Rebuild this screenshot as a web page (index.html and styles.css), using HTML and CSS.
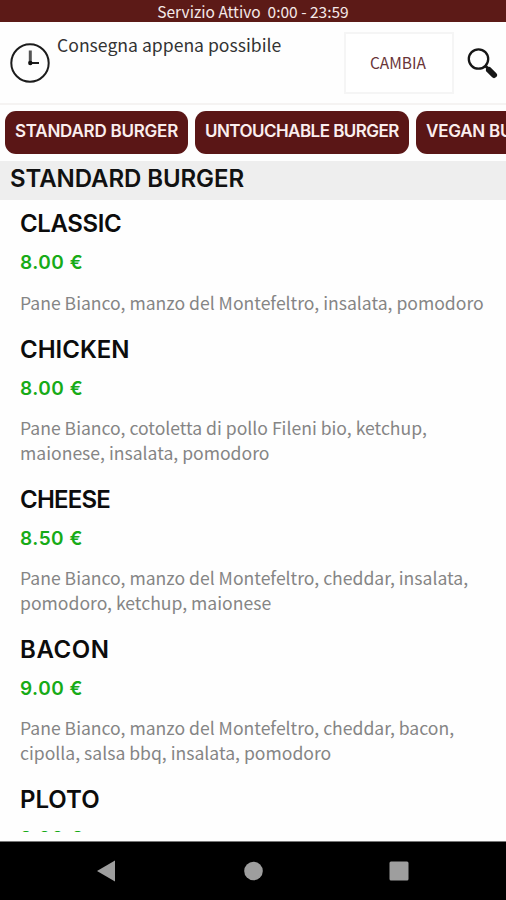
FILE: index.html
```html
<!DOCTYPE html>
<html lang="it">
<head>
<meta charset="utf-8">
<title>Menu</title>
<link rel="stylesheet" href="styles.css">
</head>
<body>
<div class="status"><span>Servizio Attivo&nbsp; 0:00 - 23:59</span></div>
<header class="delivery">
  <svg class="clock" viewBox="0 0 40 40"><circle cx="20" cy="20" r="18.7"/><path class="hand" d="M20.3 7.5V20"/><path d="M20 20H29"/><circle class="hub" cx="20.3" cy="20" r="2.2"/></svg>
  <div class="when"><span>Consegna appena possibile</span></div>
  <button class="change"><span>CAMBIA</span></button>
  <svg class="search" viewBox="0 0 32 32"><circle cx="11.5" cy="11" r="9.7"/><path class="neck" d="M18.5 18L22 21.5"/><path class="handle" d="M22 22L27 27"/></svg>
</header>
<nav class="tabs">
  <a class="tab t1"><span>STANDARD BURGER</span></a>
  <a class="tab t2"><span>UNTOUCHABLE BURGER</span></a>
  <a class="tab t3"><span>VEGAN BURGER</span></a>
</nav>
<h1 class="section"><span>STANDARD BURGER</span></h1>
<main class="menu">
  <article class="item"><h2 class="tight"><span>CLASSIC</span></h2><div class="price"><span>8.00 €</span></div><p><span>Pane Bianco, manzo del Montefeltro, insalata, pomodoro</span></p></article>
  <article class="item"><h2><span>CHICKEN</span></h2><div class="price"><span>8.00 €</span></div><p><span>Pane Bianco, cotoletta di pollo Fileni bio, ketchup,</span><br><span>maionese, insalata, pomodoro</span></p></article>
  <article class="item"><h2 class="tighter"><span>CHEESE</span></h2><div class="price"><span>8.50 €</span></div><p><span>Pane Bianco, manzo del Montefeltro, cheddar, insalata,</span><br><span>pomodoro, ketchup, maionese</span></p></article>
  <article class="item"><h2 class="wide"><span>BACON</span></h2><div class="price"><span>9.00 €</span></div><p><span>Pane Bianco, manzo del Montefeltro, cheddar, bacon,</span><br><span>cipolla, salsa bbq, insalata, pomodoro</span></p></article>
  <article class="item"><h2><span>PLOTO</span></h2><div class="price"><span>9.00 €</span></div></article>
</main>
<footer class="navbar">
  <svg viewBox="0 0 20 22"><path d="M0 11L18 .5V21.5Z"/></svg>
  <svg viewBox="0 0 20 22"><circle cx="10.5" cy="11" r="9.3"/></svg>
  <svg viewBox="0 0 20 22"><rect x=".5" y="1.5" width="19" height="19" rx="1.5"/></svg>
</footer>
</body>
</html>
```

FILE: styles.css
```css
*{box-sizing:border-box}
body{margin:0;width:506px;height:900px;overflow:hidden;display:flex;flex-direction:column;background:#fefefe;font-family:"Noto Sans CJK SC",sans-serif;white-space:nowrap}
.status{height:22px;flex:none;background:#5c1a17;color:#f5e9e8;text-align:center;font-size:15.5px;line-height:23px}
.delivery{height:83px;flex:none;display:flex;border-bottom:2px solid #f5f3f2;padding:0 7px 0 10px;align-items:flex-start}
.clock{width:40px;height:40px;margin-top:21px;fill:none;stroke:#1c1c1c;stroke-width:2}
.clock .hand{stroke:#555;stroke-width:3}
.clock .hub{fill:#111;stroke:none}
.when{width:287px;margin:11px 0 0 7px;font-size:17.6px;line-height:24px;color:#333}
.change{width:110px;height:62px;margin-top:10px;border:2px solid #f5f5f5;background:#fff;padding:0 2px 2px 0;color:#693438;font:15.5px/24px "Noto Sans CJK SC",sans-serif}
.search{width:32px;height:32px;margin:26px 0 0 13px;fill:none;stroke:#161616;stroke-width:2.3;flex:none}
.search .handle{stroke-width:6;stroke-linecap:round}
.search .neck{stroke-width:3}
.tabs{height:56px;flex:none;display:flex;gap:7px;padding:6px 0 0 5px;overflow:hidden}
.tab{flex:none;height:43px;border-radius:11px;background:#5a1616;color:#fbeeee;font:600 17px/40px Inter,sans-serif;padding-left:10px;letter-spacing:-.24px}
.t1{width:183px}
.t2{width:214px;letter-spacing:-.54px}
.t3{width:160px}
.section{margin:0;height:39px;flex:none;background:#eee;padding-left:10px;font:600 24px/36px Inter,sans-serif;color:#111;letter-spacing:-.08px}
.menu{height:632px;flex:none;overflow:hidden;padding:6px 0 0 20px}
.item{margin-bottom:16.5px}
h2{margin:0;font:600 24px/36px Inter,sans-serif;height:37px;color:#0c0c0c}
.tight{letter-spacing:-.4px}
.tighter{letter-spacing:-.8px}
.wide{letter-spacing:.6px}
.price{height:43px;font:600 19px/40px Inter,sans-serif;color:#17ab17;letter-spacing:.5px}
p{margin:0;padding-top:4.5px;font-size:17.58px;line-height:24.5px;color:#858585}
.navbar{height:59px;margin-top:auto;flex:none;background:#000;border-top:1px solid #777;display:flex;gap:126px;padding:18px 0 0 97px}
.navbar svg{width:20px;height:22px;fill:#9e9e9e}
```
